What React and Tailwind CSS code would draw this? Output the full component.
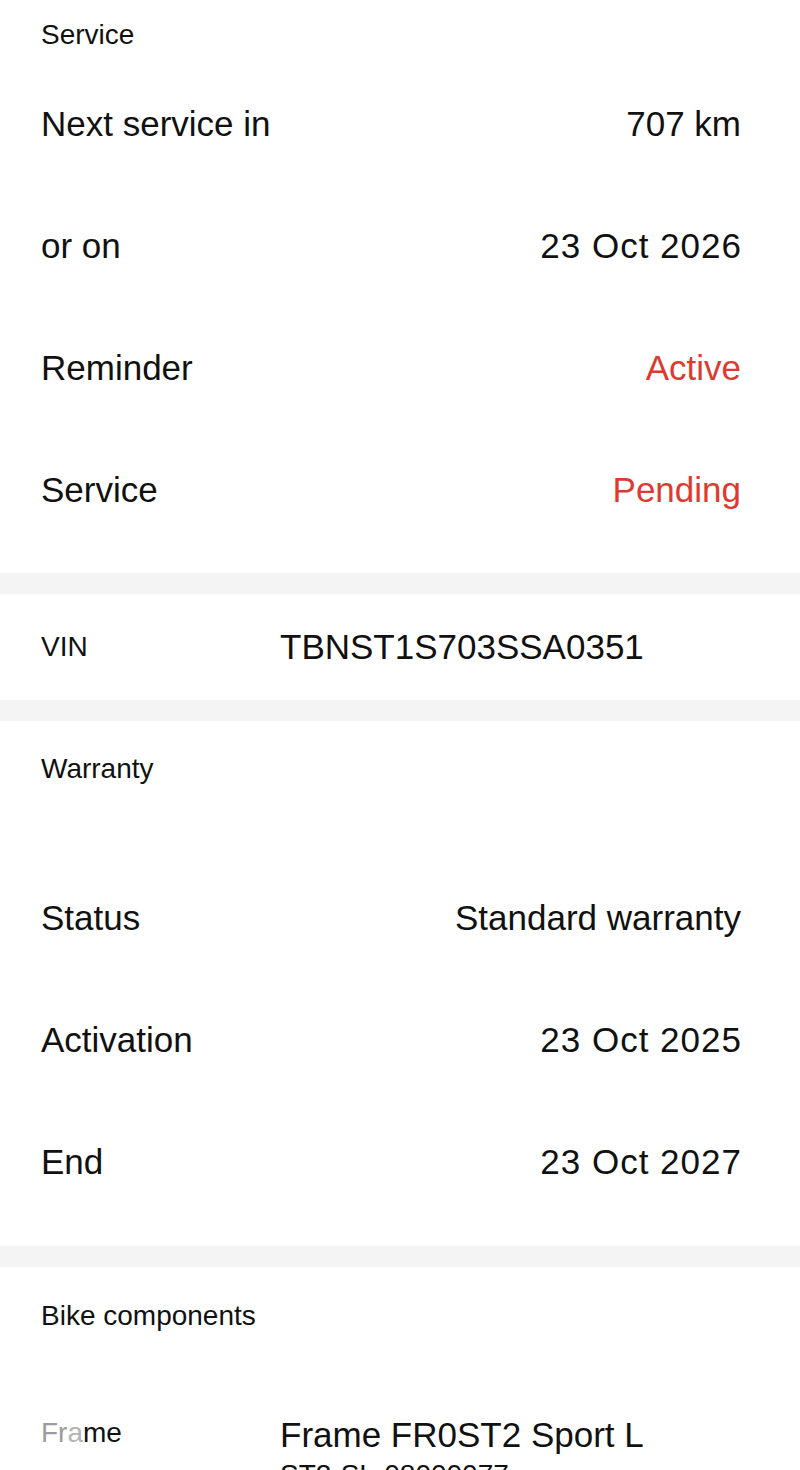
import React from "react";

const font = { fontFamily: '"Liberation Sans", Arial, sans-serif' };

function Row({ label, value, red, wide }) {
  return (
    <div className="flex h-[122px] items-center justify-between">
      <span className="text-[35px] leading-[40px] text-[#111111]">{label}</span>
      <span
        className={`text-[35px] leading-[40px] ${red ? "text-[#dc3b2f]" : "text-[#111111]"} ${wide ? "tracking-[1px] -mr-[1px]" : ""}`}
      >
        {value}
      </span>
    </div>
  );
}

function Band() {
  return <div className="h-[21px] bg-[#f4f4f4]" />;
}

export default function App() {
  return (
    <div className="w-[800px] h-[1470px] overflow-hidden bg-white" style={font}>
      {/* Service */}
      <section className="pl-[41px] pr-[59px] pb-[22px]">
        <div className="h-[63px] pt-[21px] text-[28px] leading-[28px] text-[#111111]">Service</div>
        <Row label="Next service in" value="707 km" />
        <Row label="or on" value="23 Oct 2026" wide />
        <Row label="Reminder" value="Active" red />
        <Row label="Service" value="Pending" red />
      </section>
      <Band />
      {/* VIN */}
      <section className="flex h-[106px] items-center pl-[41px] pr-[59px]">
        <span className="w-[239px] text-[28px] leading-[30px] text-[#111111]">VIN</span>
        <span className="text-[35px] leading-[40px] text-[#111111]">TBNST1S703SSA0351</span>
      </section>
      <Band />
      {/* Warranty */}
      <section className="pl-[41px] pr-[59px] pb-[23px]">
        <div className="h-[136px] pt-[34px] text-[28px] leading-[28px] text-[#111111]">Warranty</div>
        <Row label="Status" value="Standard warranty" />
        <Row label="Activation" value="23 Oct 2025" wide />
        <Row label="End" value="23 Oct 2027" wide />
      </section>
      <Band />
      {/* Bike components */}
      <section className="pl-[41px] pr-[59px]">
        <div className="h-[136px] pt-[35px] text-[28px] leading-[28px] text-[#111111]">Bike components</div>
        <div className="flex items-start pt-[12px]">
          <span className="w-[239px] pt-[3px] text-[28px] leading-[30px] text-[#111111]">
            <span className="text-[#9c9c9c]">Fr</span>
            <span className="text-[#b4b4b4]">a</span>
            <span>me</span>
          </span>
          <div className="flex flex-col">
            <span className="text-[35px] leading-[40px] text-[#111111]">Frame FR0ST2 Sport L</span>
            <span className="text-[28px] leading-[40px] text-[#111111]">ST2-SL-08000077</span>
          </div>
        </div>
      </section>
    </div>
  );
}
